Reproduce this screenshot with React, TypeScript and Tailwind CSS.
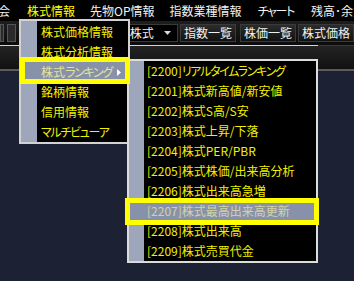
import React from "react";

const font = { fontFamily: '"Noto Sans CJK JP", "Noto Sans", sans-serif' };

const mainItems = ["株式価格情報", "株式分析情報", "株式ランキング", "銘柄情報", "信用情報", "マルチビューア"];
const subItems = [
  "[2200]リアルタイムランキング",
  "[2201]株式新高値/新安値",
  "[2202]株式S高/S安",
  "[2203]株式上昇/下落",
  "[2204]株式PER/PBR",
  "[2205]株式株価/出来高分析",
  "[2206]株式出来高急増",
  "[2207]株式最高出来高更新",
  "[2208]株式出来高",
  "[2209]株式売買代金",
];

function Kana({ text }: { text: string }) {
  const parts = text.split(/([\u30A0-\u30FF]+)/);
  return (
    <>
      {parts.map((p, i) =>
        /^[\u30A0-\u30FF]+$/.test(p) ? (
          <span key={i} className="tracking-[-1.3px]">
            {p}
          </span>
        ) : (
          <React.Fragment key={i}>{p}</React.Fragment>
        )
      )}
    </>
  );
}

function ToolButton({ label, className }: { label: string; className?: string }) {
  return (
    <div
      className={
        "h-[18px] flex items-center px-[3px] border border-[#3a3a3a] bg-gradient-to-b from-[#2c2c2c] to-[#121212] text-[#f0f0f0] text-[12px] leading-none whitespace-nowrap " +
        (className ?? "")
      }
    >
      {label}
    </div>
  );
}

export default function App() {
  return (
    <div className="relative w-[354px] h-[281px] overflow-hidden bg-[#1c2133] [font-feature-settings:'palt']" style={font}>
      {/* Menu bar */}
      <div className="h-[21px] bg-black flex items-center text-[12px] leading-none text-[#f2f2f2] whitespace-nowrap">
        <span className="ml-[-2px]">会</span>
        <span className="ml-[17px] text-[#ffff00]">株式情報</span>
        <span className="ml-[15px]">先物OP情報</span>
        <span className="ml-[15px]">指数業種情報</span>
        <span className="ml-[16px]">
          <Kana text="チャート" />
        </span>
        <span className="ml-[17px]">残高･余力</span>
      </div>

      {/* Toolbar */}
      <div className="h-[24px] bg-gradient-to-b from-[#1e1e1e] to-[#0c0c0c] flex items-center">
        <div className="w-[5px] h-[18px] border border-[#555] bg-[#2a2a2a]" />
        <div className="ml-[3px] w-[10px] h-[18px] border border-[#555] bg-[#2a2a2a]" />
        <div className="ml-[110px] w-[64px] h-[18px] bg-black border border-[#3a3a3a] flex items-center pl-[3px] text-[12px] leading-none text-[#f0f0f0]">
          <span>株式</span>
          <svg className="ml-auto mr-[6px]" width="7" height="4" viewBox="0 0 7 4">
            <polygon points="0,0 7,0 3.5,4" fill="#d8d8d8" />
          </svg>
        </div>
        <ToolButton label="指数一覧" className="ml-[2px] w-[57px]" />
        <ToolButton label="株価一覧" className="ml-[4px] w-[58px]" />
        <ToolButton label="株式価格" className="ml-[2px] w-[60px]" />
      </div>

      {/* Third bar */}
      <div className="h-[26px] flex">
        <div className="w-[318px] border-t border-[#d6d6d6] bg-gradient-to-b from-[#242424] to-[#111111] border-b-2 border-b-[#5c5c5c]" />
        <div className="flex-1 border-t border-[#3a3a3a] bg-gradient-to-b from-[#242424] to-[#111111] border-b-2 border-b-[#5c5c5c]" />
      </div>

      {/* Main dropdown menu */}
      <div className="absolute left-[19px] top-[19px] w-[111px] h-[125px] border-2 border-[#d2d2d2] bg-black flex">
        <div className="absolute left-0 top-0 bottom-0 w-[16px] bg-[#9ea6bc]" />
        <div className="relative flex flex-col pt-[1px] w-full">
          {mainItems.map((t, i) => (
            <div
              key={t}
              className={
                "h-[20px] flex items-center pl-[20px] text-[12px] leading-none whitespace-nowrap " +
                (i === 2 ? "bg-[#8792aa] text-[#e2e29c]" : "text-[#f0f000]")
              }
            >
              <span>
                <Kana text={t} />
              </span>
              {i === 2 && (
                <svg className="ml-auto mr-[7px]" width="4" height="7" viewBox="0 0 4 7">
                  <polygon points="0,0 4,3.5 0,7" fill="#ffffff" />
                </svg>
              )}
            </div>
          ))}
        </div>
      </div>

      {/* Sub menu */}
      <div className="absolute left-[127px] top-[59px] w-[191px] h-[204px] border-2 border-[#dcdcdc] bg-black flex">
        <div className="absolute left-0 top-0 bottom-0 w-[15px] bg-[#9ea6bc]" />
        <div className="relative flex flex-col w-full">
          {subItems.map((t, i) => (
            <div
              key={t}
              className={
                "h-[20px] flex items-center pl-[18px] text-[12px] leading-none whitespace-nowrap " +
                (i === 7 ? "bg-[#8792aa] text-[#d2d2a8]" : "text-[#f0f000]")
              }
            >
              <Kana text={t} />
            </div>
          ))}
        </div>
      </div>

      {/* Highlight annotation boxes */}
      <div className="absolute left-[20px] top-[57px] w-[110px] h-[27px] border-[5px] border-[#ffff00]" />
      <div className="absolute left-[125px] top-[198px] w-[194px] h-[27px] border-[5px] border-[#ffff00]" />
    </div>
  );
}
